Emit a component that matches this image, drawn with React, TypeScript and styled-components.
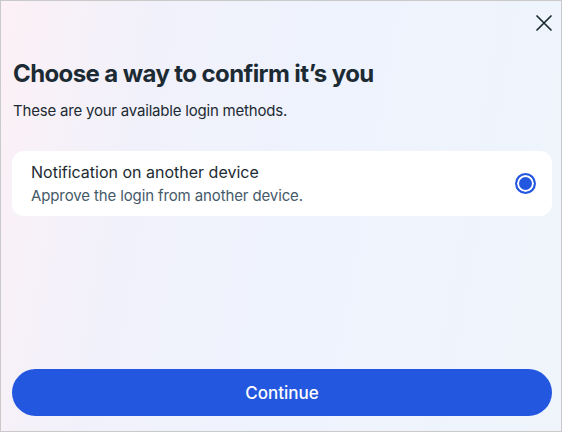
import styled, { createGlobalStyle } from "styled-components";

const GlobalStyle = createGlobalStyle`
  html, body {
    margin: 0;
    padding: 0;
  }

  body {
    font-family: Inter, "Noto Sans", "Liberation Sans", sans-serif;
    color: #1c2b33;
  }

  * {
    box-sizing: border-box;
  }
`;

const App = () => {
  return (
    <>
      <GlobalStyle />
      <Dialog>
        <TopBar>
          <CloseButton aria-label="Close">
            <svg width="16" height="16" viewBox="0 0 16 16" fill="none">
              <path d="M1 1L15 15M15 1L1 15" stroke="#1c2b33" strokeWidth="1.7" strokeLinecap="round" />
            </svg>
          </CloseButton>
        </TopBar>

        <Title>Choose a way to confirm it’s you</Title>
        <Subtitle>These are your available login methods.</Subtitle>

        <OptionCard>
          <OptionText>
            <OptionTitle>Notification on another device</OptionTitle>
            <OptionDesc>Approve the login from another device.</OptionDesc>
          </OptionText>
          <Radio $checked />
        </OptionCard>

        <Spacer />

        <ContinueButton>Continue</ContinueButton>
      </Dialog>
    </>
  );
};

export default App;

const Dialog = styled.div`
  width: 562px;
  height: 432px;
  padding: 0 9px 15px 11px;

  display: flex;
  flex-direction: column;

  border: 1px solid #c9c9c9;
  background: linear-gradient(100deg, #fcf1f6 0%, #f1f1fb 25%, #eef3fd 60%, #eff5fb 100%);
`;

const TopBar = styled.div`
  height: 48px;
  display: flex;
  justify-content: flex-end;
  align-items: flex-start;
  padding-top: 14px;
`;

const CloseButton = styled.button`
  width: 16px;
  height: 16px;
  padding: 0;

  display: flex;
  align-items: center;
  justify-content: center;

  border: none;
  background: transparent;
  cursor: pointer;
`;

const Title = styled.h1`
  margin: 10px 0 0 1px;
  font-size: 24px;
  line-height: 30px;
  font-weight: 700;
  letter-spacing: -0.6px;
  color: #1c2b33;
`;

const Subtitle = styled.p`
  margin: 12px 0 0 1px;
  font-size: 15px;
  line-height: 20px;
  letter-spacing: -0.2px;
  color: #1c2b33;
`;

const OptionCard = styled.div`
  margin-top: 30px;
  height: 65px;
  padding: 0 16px 0 19px;

  display: flex;
  align-items: center;
  justify-content: space-between;

  border-radius: 12px;
  background: #ffffff;
`;

const OptionText = styled.div`
  display: flex;
  flex-direction: column;
  gap: 4px;
`;

const OptionTitle = styled.span`
  font-size: 16px;
  line-height: 20px;
  color: #1c2b33;
`;

const OptionDesc = styled.span`
  font-size: 15px;
  line-height: 20px;
  letter-spacing: -0.12px;
  color: #465a69;
`;

const Radio = styled.span<{ $checked?: boolean }>`
  width: 21px;
  height: 21px;
  border-radius: 50%;
  border: 2px solid #2457e0;
  background: ${({ $checked }) => ($checked ? "#2457e0" : "transparent")};
  box-shadow: inset 0 0 0 2px #ffffff;
`;

const Spacer = styled.div`
  flex: 1;
`;

const ContinueButton = styled.button`
  width: 100%;
  height: 47px;

  border: none;
  border-radius: 24px;
  background: #2457e0;

  font-family: Inter, "Noto Sans", "Liberation Sans", sans-serif;
  font-size: 17px;
  font-weight: 500;
  color: #ffffff;
  cursor: pointer;
`;
